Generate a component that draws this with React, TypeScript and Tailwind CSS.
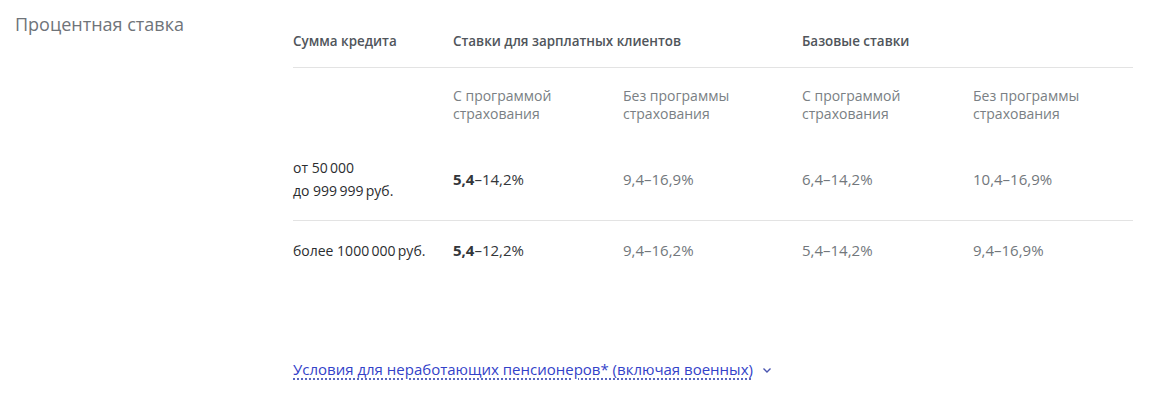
const FONT = "font-['Open_Sans',_'Liberation_Sans',_sans-serif]";

const subHeads = [
  "С программой",
  "Без программы",
  "С программой",
  "Без программы"
];

interface RateRow {
  label: string[];
  bold: string;
  rest: string;
  values: string[];
}

const rows: RateRow[] = [
  {
    label: ["от 50\u2009000", "до 999\u2009999\u2009руб."],
    bold: "5,4",
    rest: "–14,2%",
    values: ["9,4–16,9%", "6,4–14,2%", "10,4–16,9%"]
  },
  {
    label: ["более 1000\u2009000\u2009руб."],
    bold: "5,4",
    rest: "–12,2%",
    values: ["9,4–16,2%", "5,4–14,2%", "9,4–16,9%"]
  }
];

const cols = "grid grid-cols-[160px_170px_179px_171px_160px]";

export default function App() {
  return (
    <div className={`${FONT} bg-white w-[1162px] h-[411px] flex`}>
      <div className="w-[293px] shrink-0 pl-[15px] pt-[11px]">
        <h2 className="text-[18px] leading-[26px] text-[#6f7479]">
          Процентная ставка
        </h2>
      </div>

      <div className="w-[840px] flex flex-col">
        <div
          className={`${cols} pt-[31px] pb-[16px] border-b border-[#e3e3e3] text-[13.4px] leading-[20px] font-semibold text-[#50555b]`}
        >
          <div>Сумма кредита</div>
          <div className="col-span-2">Ставки для зарплатных клиентов</div>
          <div className="col-span-2">Базовые ставки</div>
        </div>

        <div
          className={`${cols} pt-[19px] text-[14px] leading-[17.5px] text-[#7a7f84]`}
        >
          <div />
          {subHeads.map((t, i) => (
            <div key={i}>
              {t}
              <br />
              страхования
            </div>
          ))}
        </div>

        {rows.map((row, i) => (
          <div
            key={i}
            className={`${cols} items-center ${
              i === 0
                ? "pt-[34px] pb-[18px] border-b border-[#e3e3e3]"
                : "pt-[18px]"
            }`}
          >
            <div className="text-[14px] leading-[23px] text-[#2b2d30]">
              {row.label.map((l, j) => (
                <div key={j}>{l}</div>
              ))}
            </div>
            <div className="text-[15px] leading-[23px] text-[#33363a]">
              <span className="font-bold">{row.bold}</span>
              {row.rest}
            </div>
            {row.values.map((v, j) => (
              <div key={j} className="text-[15px] leading-[23px] text-[#72777c]">
                {v}
              </div>
            ))}
          </div>
        ))}

        <div className="mt-[97px] flex items-center gap-[8px]">
          <a
            href="#"
            className="text-[15px] leading-[20px] text-[#3342c9] underline decoration-dotted decoration-[#2233aa] underline-offset-[4px]"
          >
            Условия для неработающих пенсионеров* (включая военных)
          </a>
          <svg
            width="12"
            height="12"
            viewBox="0 0 12 12"
            fill="none"
            stroke="#4a55b0"
            strokeWidth="1.4"
            className="mt-[2px]"
          >
            <path d="M2.5 4.5 6 8l3.5-3.5" />
          </svg>
        </div>
      </div>
    </div>
  );
}
